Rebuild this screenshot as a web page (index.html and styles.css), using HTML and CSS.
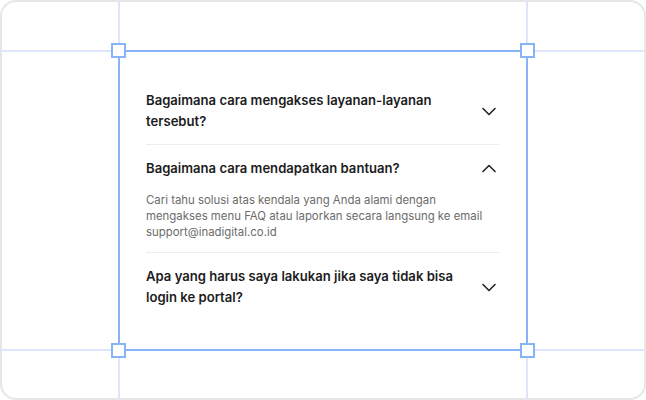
FILE: index.html
```html
<!DOCTYPE html>
<html lang="id">
<head>
<meta charset="utf-8">
<title>FAQ</title>
<link rel="stylesheet" href="styles.css">
</head>
<body>
<div class="frame">
  <div class="guide guide-v guide-left"></div>
  <div class="guide guide-v guide-right"></div>
  <div class="guide guide-h guide-top"></div>
  <div class="guide guide-h guide-bottom"></div>

  <div class="selection">
    <span class="handle handle-tl"></span>
    <span class="handle handle-tr"></span>
    <span class="handle handle-bl"></span>
    <span class="handle handle-br"></span>

    <div class="faq">
      <div class="item">
        <div class="question">
          <span class="q-text">Bagaimana cara mengakses layanan-layanan tersebut?</span>
          <svg class="chev" viewBox="0 0 20 20" width="20" height="20"><path d="M4 7.5 L10 13.5 L16 7.5" /></svg>
        </div>
      </div>
      <div class="item open">
        <div class="question">
          <span class="q-text">Bagaimana cara mendapatkan bantuan?</span>
          <svg class="chev" viewBox="0 0 20 20" width="20" height="20"><path d="M4 12.5 L10 6.5 L16 12.5" /></svg>
        </div>
        <p class="answer">Cari tahu solusi atas kendala yang Anda alami dengan mengakses menu FAQ atau laporkan secara langsung ke email support@inadigital.co.id</p>
      </div>
      <div class="item">
        <div class="question">
          <span class="q-text">Apa yang harus saya lakukan jika saya tidak bisa login ke portal?</span>
          <svg class="chev" viewBox="0 0 20 20" width="20" height="20"><path d="M4 7.5 L10 13.5 L16 7.5" /></svg>
        </div>
      </div>
    </div>
  </div>
</div>
</body>
</html>
```

FILE: styles.css
```css
* { box-sizing: border-box; }

html, body {
  margin: 0;
  padding: 0;
  background: #ffffff;
}

body {
  font-family: Inter, "Noto Sans", sans-serif;
}

.frame {
  position: relative;
  width: 646px;
  height: 400px;
  border: 2px solid #e6e6e6;
  border-radius: 16px;
  overflow: hidden;
  background: #ffffff;
  display: flex;
  align-items: flex-start;
  justify-content: center;
  padding-top: 48px;
}

.guide {
  position: absolute;
  background: #dfe5fc;
}
.guide-v { top: 0; bottom: 0; width: 2px; }
.guide-h { left: 0; right: 0; height: 2px; }
.guide-left { left: 116px; }
.guide-right { left: 524px; }
.guide-top { top: 48px; }
.guide-bottom { top: 347px; }

.selection {
  position: relative;
  width: 410px;
  height: 301px;
  border: 2px solid #87b3f7;
  background: #ffffff;
  padding: 25px 27px 26px 26px;
}

.handle {
  position: absolute;
  width: 15px;
  height: 15px;
  border: 2px solid #87b3f7;
  background: #ffffff;
}
.handle-tl { left: -9px; top: -9px; }
.handle-tr { right: -9px; top: -9px; }
.handle-bl { left: -9px; bottom: -9px; }
.handle-br { right: -9px; bottom: -9px; }

.faq {
  display: flex;
  flex-direction: column;
}

.item {
  padding: 13px 0 12px;
  border-bottom: 1px solid #ececec;
}
.item:last-child { border-bottom: none; }

.question {
  display: flex;
  align-items: center;
  justify-content: space-between;
  gap: 16px;
}

.q-text {
  flex: 1;
  font-size: 13.1px;
  font-weight: 600;
  line-height: 21px;
  color: #1c1c1e;
}

.chev {
  flex: none;
  fill: none;
  stroke: #222222;
  stroke-width: 1.6;
  stroke-linecap: round;
  stroke-linejoin: round;
}

.answer {
  margin: 13px 0 0;
  font-size: 11.4px;
  line-height: 16px;
  color: #6b6b6b;
}
```
